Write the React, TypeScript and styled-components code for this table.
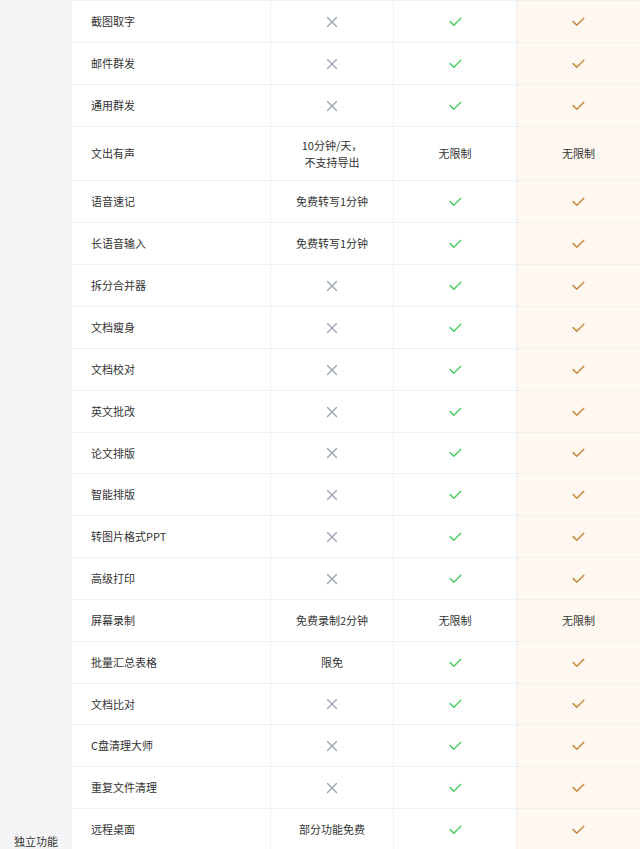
import React from "react";
import styled, { createGlobalStyle } from "styled-components";

const Global = createGlobalStyle`
  html, body { margin: 0; padding: 0; background: #fff; }
  body {
    font-family: "Noto Sans CJK SC", "Noto Sans", sans-serif;
    color: #333;
    overflow: hidden;
    height: 849px;
  }
`;

const Page = styled.div`
  display: flex;
  width: 640px;
  height: 849px;
  overflow: hidden;
`;

const CategoryColumn = styled.div`
  width: 72px;
  flex: none;
  background: #f5f5f7;
  display: flex;
  flex-direction: column;
  justify-content: flex-end;
  align-items: center;
`;

const CategoryLabel = styled.div`
  font-size: 11px;
  line-height: 13px;
  color: #333;
  padding-bottom: 1px;
`;

const Table = styled.div`
  flex: 1;
  display: flex;
  flex-direction: column;
  border-top: 1px solid #eef0f3;
`;

const Row = styled.div<{ $h: number }>`
  display: grid;
  grid-template-columns: 199px 123px 123px 1fr;
  height: ${(p) => p.$h}px;
  flex: none;
  border-bottom: 1px solid #eef0f3;
  box-sizing: border-box;
`;

const Cell = styled.div<{ $premium?: boolean; $left?: boolean }>`
  display: flex;
  align-items: center;
  justify-content: ${(p) => (p.$left ? "flex-start" : "center")};
  padding-left: ${(p) => (p.$left ? "19px" : "0")};
  text-align: center;
  font-size: 11px;
  line-height: 17px;
  color: #333;
  background: ${(p) => (p.$premium ? "#fff8f1" : "#fff")};
  border-right: ${(p) => (p.$premium ? "none" : "1px solid #eef0f3")};
  box-sizing: border-box;
`;

const Cross = () => (
  <svg width="12" height="12" viewBox="0 0 12 12">
    <path d="M1.5 1.5 L10.5 10.5 M10.5 1.5 L1.5 10.5" stroke="#9da2b0" strokeWidth="1.4" fill="none" strokeLinecap="round" />
  </svg>
);

const Check = ({ color }: { color: string }) => (
  <svg width="13" height="10" viewBox="0 0 13 10">
    <path d="M1.2 4.6 L4.8 8.2 L11.8 1.2" stroke={color} strokeWidth="1.5" fill="none" strokeLinecap="round" strokeLinejoin="round" />
  </svg>
);

type V = "x" | "v" | string;

const rows: { name: string; free: V; mid: V; top: V; h: number }[] = [
  { name: "截图取字", free: "x", mid: "v", top: "v", h: 42 },
  { name: "邮件群发", free: "x", mid: "v", top: "v", h: 42 },
  { name: "通用群发", free: "x", mid: "v", top: "v", h: 42 },
  { name: "文出有声", free: "10分钟/天，\n不支持导出", mid: "无限制", top: "无限制", h: 54 },
  { name: "语音速记", free: "免费转写1分钟", mid: "v", top: "v", h: 42 },
  { name: "长语音输入", free: "免费转写1分钟", mid: "v", top: "v", h: 42 },
  { name: "拆分合并器", free: "x", mid: "v", top: "v", h: 42 },
  { name: "文档瘦身", free: "x", mid: "v", top: "v", h: 42 },
  { name: "文档校对", free: "x", mid: "v", top: "v", h: 42 },
  { name: "英文批改", free: "x", mid: "v", top: "v", h: 42 },
  { name: "论文排版", free: "x", mid: "v", top: "v", h: 41 },
  { name: "智能排版", free: "x", mid: "v", top: "v", h: 42 },
  { name: "转图片格式PPT", free: "x", mid: "v", top: "v", h: 42 },
  { name: "高级打印", free: "x", mid: "v", top: "v", h: 42 },
  { name: "屏幕录制", free: "免费录制2分钟", mid: "无限制", top: "无限制", h: 42 },
  { name: "批量汇总表格", free: "限免", mid: "v", top: "v", h: 42 },
  { name: "文档比对", free: "x", mid: "v", top: "v", h: 41 },
  { name: "C盘清理大师", free: "x", mid: "v", top: "v", h: 42 },
  { name: "重复文件清理", free: "x", mid: "v", top: "v", h: 42 },
  { name: "远程桌面", free: "部分功能免费", mid: "v", top: "v", h: 42 },
];

const Content = ({ v, premium }: { v: V; premium?: boolean }) => {
  if (v === "x") return <Cross />;
  if (v === "v") return <Check color={premium ? "#c7873e" : "#4fd066"} />;
  return (
    <span>
      {v.split("\n").map((l, i) => (
        <React.Fragment key={i}>
          {i > 0 && <br />}
          {l}
        </React.Fragment>
      ))}
    </span>
  );
};

export default function App() {
  return (
    <>
      <Global />
      <Page>
        <CategoryColumn>
          <CategoryLabel>独立功能</CategoryLabel>
        </CategoryColumn>
        <Table>
          {rows.map((r) => (
            <Row key={r.name} $h={r.h}>
              <Cell $left>{r.name}</Cell>
              <Cell>
                <Content v={r.free} />
              </Cell>
              <Cell>
                <Content v={r.mid} />
              </Cell>
              <Cell $premium>
                <Content v={r.top} premium />
              </Cell>
            </Row>
          ))}
        </Table>
      </Page>
    </>
  );
}
